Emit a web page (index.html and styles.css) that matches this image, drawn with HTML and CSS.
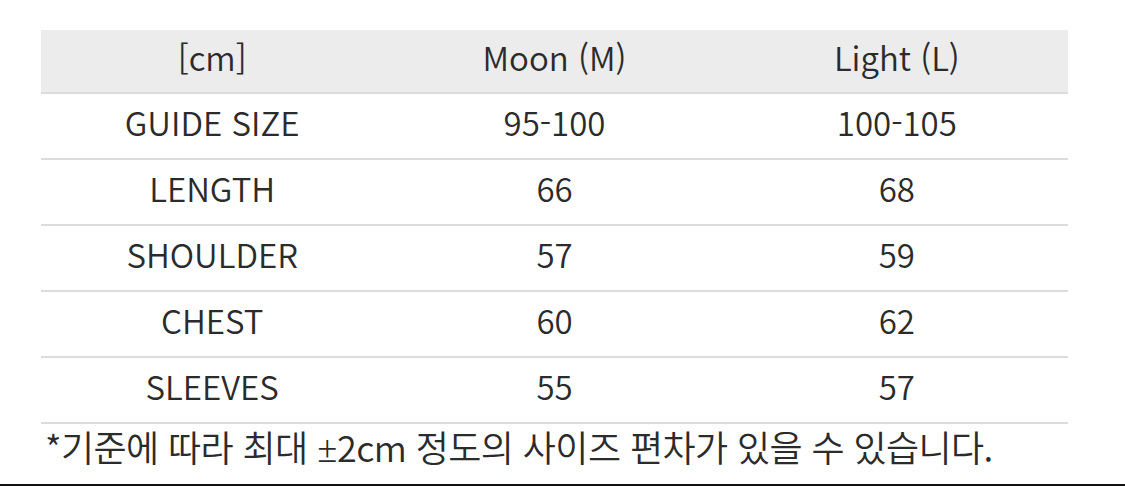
FILE: index.html
```html
<!DOCTYPE html>
<html lang="ko">
<head>
<meta charset="utf-8">
<link rel="stylesheet" href="styles.css">
</head>
<body>
<div class="page">
  <div class="table">
    <div class="row head"><div class="cell">[cm]</div><div class="cell">Moon (M)</div><div class="cell">Light (L)</div></div>
    <div class="row"><div class="cell">GUIDE SIZE</div><div class="cell">95-100</div><div class="cell">100-105</div></div>
    <div class="row"><div class="cell">LENGTH</div><div class="cell">66</div><div class="cell">68</div></div>
    <div class="row"><div class="cell">SHOULDER</div><div class="cell">57</div><div class="cell">59</div></div>
    <div class="row"><div class="cell">CHEST</div><div class="cell">60</div><div class="cell">62</div></div>
    <div class="row"><div class="cell">SLEEVES</div><div class="cell">55</div><div class="cell">57</div></div>
  </div>
  <p class="note">*기준에 따라 최대 <span class="pm">±</span>2cm 정도의 사이즈 편차가 있을 수 있습니다.</p>
</div>
</body>
</html>
```
FILE: styles.css
```css
html, body { margin: 0; padding: 0; background: #fff; }
body { width: 1125px; height: 486px; overflow: hidden; font-family: "Noto Sans CJK KR", "Noto Sans", sans-serif; color: #2b2b2b; }
.page { height: 486px; box-sizing: border-box; padding-top: 30px; border-bottom: 2px solid #111; display: flex; flex-direction: column; }
.table { margin-left: 41px; width: 1027px; }
.row { display: grid; grid-template-columns: repeat(3, 1fr); height: 66px; border-bottom: 2px solid #dcdcdc; box-sizing: border-box; }
.head { background: #ececec; height: 64px; }
.cell { display: flex; align-items: center; justify-content: center; font-size: 33px; font-weight: 350; letter-spacing: 0; padding-bottom: 9px; }
.note { margin: 0 0 0 45px; font-size: 36px; font-weight: 350; line-height: 44px; letter-spacing: -0.6px; }
.pm { font-family: "Noto Sans", sans-serif; }
```
